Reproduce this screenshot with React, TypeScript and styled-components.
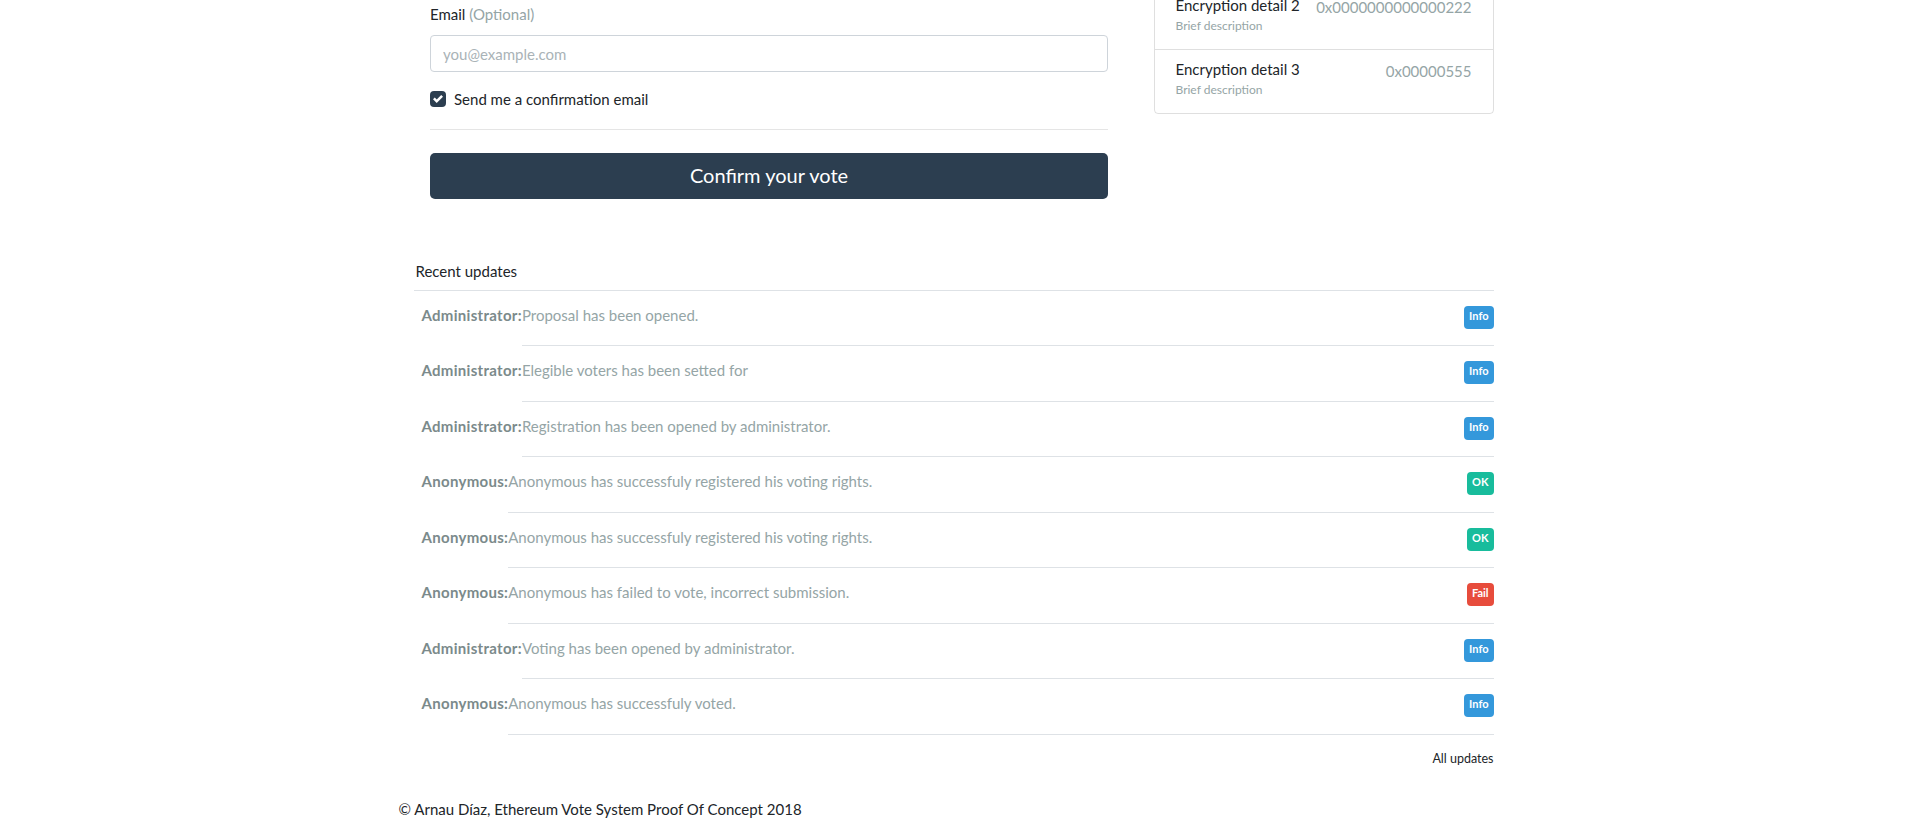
import styled, { createGlobalStyle } from "styled-components";

const GlobalStyle = createGlobalStyle`
  html, body { margin: 0; padding: 0; background: #fff; }
  body {
    font-family: Lato, "Liberation Sans", sans-serif;
    font-size: 15px;
    line-height: 1.5;
    color: #212529;
    overflow: hidden;
  }
  * { box-sizing: border-box; }
`;

type Level = "info" | "ok" | "fail";

const updates: { who: string; text: string; level: Level }[] = [
  { who: "Administrator", text: "Proposal has been opened.", level: "info" },
  { who: "Administrator", text: "Elegible voters has been setted for", level: "info" },
  { who: "Administrator", text: "Registration has been opened by administrator.", level: "info" },
  { who: "Anonymous", text: "Anonymous has successfuly registered his voting rights.", level: "ok" },
  { who: "Anonymous", text: "Anonymous has successfuly registered his voting rights.", level: "ok" },
  { who: "Anonymous", text: "Anonymous has failed to vote, incorrect submission.", level: "fail" },
  { who: "Administrator", text: "Voting has been opened by administrator.", level: "info" },
  { who: "Anonymous", text: "Anonymous has successfuly voted.", level: "info" },
];

const details = [
  { name: "Encryption detail 1", value: "0x0000000000000111" },
  { name: "Encryption detail 2", value: "0x0000000000000222" },
  { name: "Encryption detail 3", value: "0x00000555" },
];

const badgeLabel: Record<Level, string> = { info: "Info", ok: "OK", fail: "Fail" };

export default function App() {
  return (
    <>
      <GlobalStyle />
      <Container>
        <TopRow>
          <FormCol>
            <Label>
              Email <Muted>(Optional)</Muted>
            </Label>
            <Input type="email" placeholder="you@example.com" />
            <CheckRow>
              <CheckBox>
                <svg width="10" height="10" viewBox="0 0 8 8">
                  <path fill="#fff" d="M6.564.75l-3.59 3.612-1.538-1.55L0 4.26l2.974 2.99L8 2.193z" />
                </svg>
              </CheckBox>
              <span>Send me a confirmation email</span>
            </CheckRow>
            <Rule />
            <PrimaryButton>Confirm your vote</PrimaryButton>
          </FormCol>

          <DetailCol>
            <Card>
              {details.map((d) => (
                <DetailItem key={d.name}>
                  <div>
                    <DetailTitle>{d.name}</DetailTitle>
                    <DetailBrief>Brief description</DetailBrief>
                  </div>
                  <DetailValue>{d.value}</DetailValue>
                </DetailItem>
              ))}
            </Card>
          </DetailCol>
        </TopRow>

        <Updates>
          <UpdatesHead>Recent updates</UpdatesHead>
          {updates.map((u, i) => (
            <UpdateRow key={i}>
              <Who>{u.who}:</Who>
              <UpdateBody>
                <Message>{u.text}</Message>
                <Badge level={u.level}>{badgeLabel[u.level]}</Badge>
              </UpdateBody>
            </UpdateRow>
          ))}
          <AllLink>All updates</AllLink>
        </Updates>
      </Container>
      <Footer>© Arnau Díaz, Ethereum Vote System Proof Of Concept 2018</Footer>
    </>
  );
}

const Container = styled.div`
  width: 1080px;
  margin: 0 auto;
`;

const TopRow = styled.div`
  display: grid;
  grid-template-columns: 1fr 340px;
  align-items: start;
`;

const FormCol = styled.div`
  padding: 3px 45.5px 0 16.5px;
  display: flex;
  flex-direction: column;
`;

const Label = styled.label`
  display: block;
  line-height: 22px;
  margin-bottom: 10px;
`;

const Muted = styled.span`
  color: #95a5a6;
`;

const Input = styled.input`
  height: 37px;
  width: 100%;
  padding: 0 12px;
  border: 1px solid #ced4da;
  border-radius: 4px;
  font-family: inherit;
  font-size: 15px;
  color: #495057;
  outline: none;
  &::placeholder { color: #aab3b7; }
`;

const CheckRow = styled.div`
  display: flex;
  align-items: center;
  gap: 8px;
  margin-top: 16px;
  line-height: 22px;
`;

const CheckBox = styled.span`
  width: 16px;
  height: 16px;
  border-radius: 4px;
  background: #2c3e50;
  display: flex;
  align-items: center;
  justify-content: center;
  flex: none;
`;

const Rule = styled.hr`
  width: 100%;
  margin: 18.5px 0 23.5px;
  border: 0;
  border-top: 1px solid rgba(0, 0, 0, 0.1);
`;

const PrimaryButton = styled.button`
  height: 46px;
  width: 100%;
  padding: 0 0 3px;
  border: 0;
  border-radius: 5px;
  background: #2c3e50;
  color: #fff;
  font-family: inherit;
  font-size: 20px;
  cursor: pointer;
`;

const DetailCol = styled.div`
  margin-top: -79px;
`;

const Card = styled.div`
  border: 1px solid rgba(0, 0, 0, 0.125);
  border-radius: 4px;
`;

const DetailItem = styled.div`
  display: flex;
  justify-content: space-between;
  align-items: flex-start;
  gap: 12px;
  padding: 10px 21px 14px 21px;
  & + & { border-top: 1px solid rgba(0, 0, 0, 0.125); }
`;

const DetailTitle = styled.div`
  font-size: 15px;
  line-height: 18px;
  margin-bottom: 3px;
  white-space: nowrap;
`;

const DetailBrief = styled.div`
  font-size: 12px;
  line-height: 18px;
  color: #95a5a6;
`;

const DetailValue = styled.span`
  font-size: 15px;
  line-height: 22.5px;
  color: #95a5a6;
  white-space: nowrap;
`;

const Updates = styled.section`
  margin-top: 61px;
`;

const UpdatesHead = styled.div`
  line-height: 22.5px;
  padding: 0 0 7px 2px;
  border-bottom: 1px solid #dee2e6;
`;

const UpdateRow = styled.div`
  display: flex;
  align-items: flex-start;
  padding-left: 8px;
  line-height: 22.5px;
`;

const Who = styled.strong`
  padding-top: 13px;
  font-weight: 700;
  letter-spacing: 0.3px;
  color: #7b8a8b;
  white-space: nowrap;
`;

const UpdateBody = styled.div`
  flex: 1;
  display: flex;
  align-items: flex-start;
  justify-content: space-between;
  padding: 13px 0 16.5px;
  border-bottom: 1px solid #dee2e6;
`;

const Message = styled.span`
  color: #95a5a6;
`;

const badgeBg: Record<Level, string> = { info: "#3498db", ok: "#18bc9c", fail: "#e74c3c" };

const Badge = styled.span<{ level: Level }>`
  display: inline-block;
  height: 23px;
  margin-top: 2px;
  padding: 4px 5px 0;
  border-radius: 4px;
  background: ${(p) => badgeBg[p.level]};
  color: #fff;
  font-size: 11px;
  font-weight: 700;
  line-height: 11px;
`;

const AllLink = styled.div`
  text-align: right;
  font-size: 12.5px;
  line-height: 19px;
  margin-top: 14px;
  color: #212529;
`;

const Footer = styled.footer`
  width: 1110px;
  margin: 30px auto 0;
  line-height: 22.5px;
`;
